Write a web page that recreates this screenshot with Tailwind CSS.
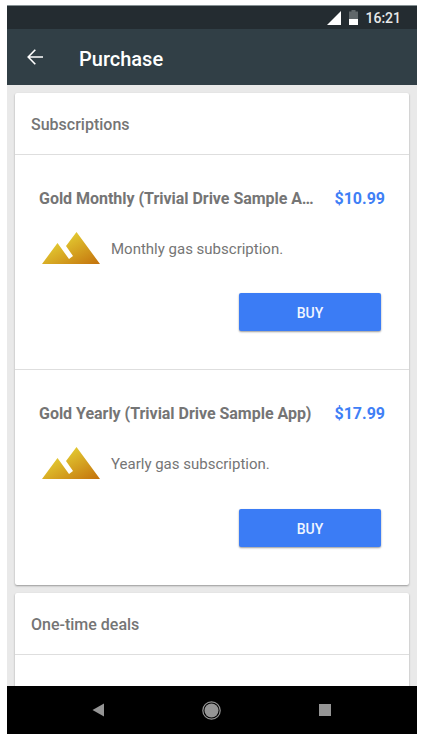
<!DOCTYPE html>
<html lang="en">
<head>
    <meta charset="UTF-8">
    <meta name="viewport" content="width=device-width, initial-scale=1.0">
    <title>Purchase</title>
    <script src="https://cdn.jsdelivr.net/npm/@tailwindcss/browser@4"></script>
</head>
<body class="bg-white h-[741px] overflow-hidden pt-[5px] pl-[7px] font-['Roboto',sans-serif] text-[#757575]">
    <div class="w-[410px] h-[729px] flex flex-col bg-[#e9e9e9] overflow-hidden">
        <!-- Status bar -->
        <div class="h-6 shrink-0 flex items-center justify-end pr-4 bg-[#242c31] border-t border-[#859093] text-white">
            <svg class="w-[14px] h-[14px] mr-2" viewBox="0 0 14 14"><path d="M0 14L14 0V14Z" fill="#fff"/></svg>
            <svg class="w-[9px] h-[15px] mr-[7px]" viewBox="0 0 9 15">
                <path d="M2.500 0h4v1.500H9V9H0V1.500h2.500z" fill="#60676a"/>
                <path d="M0 9h9v6H0z" fill="#fff"/>
            </svg>
            <span class="pt-px text-sm font-medium text-[#e9eaea]">16:21</span>
        </div>

        <!-- App bar -->
        <header class="h-14 shrink-0 flex items-center pl-5 bg-[#313f46] text-white">
            <svg class="w-4 h-4 mr-9" viewBox="0 0 16 16" fill="none" stroke="#fff" stroke-width="1.600"><path d="M16 8H1.500M8.300 0.800L1.200 8L8.300 15.200"/></svg>
            <h1 class="pt-[3px] text-xl font-medium">Purchase</h1>
        </header>

        <main class="flex-1 min-h-0 overflow-hidden p-2 space-y-2">
            <section class="h-[492px] rounded-xs bg-white shadow-[0_1px_2px_rgba(0,0,0,0.35)]">
                <h2 class="h-[61px] flex items-center px-4 pt-[2px] text-base font-medium">Subscriptions</h2>
                <article class="h-[215px] border-t border-[#dedede] px-6">
                    <div class="flex justify-between pt-8 text-base leading-6 font-bold">
                        <h3 class="w-[276px] truncate tracking-[-0.025px]">Gold Monthly (Trivial Drive Sample App)</h3>
                        <span class="text-[#3f80f6]">$10.99</span>
                    </div>
                    <div class="flex items-center h-8 mt-[21px]">
                        <svg class="w-[58px] h-8 ml-[3px] mr-[11px]" viewBox="0 0 58 32">
                            <defs>
                                <linearGradient id="gold" x1="0" y1="0" x2="1" y2="1">
                                    <stop offset="0.200" stop-color="#e6d335"/>
                                    <stop offset="1" stop-color="#c3710c"/>
                                </linearGradient>
                            </defs>
                            <path d="M0 32L15.500 11L27 27L31 24L24 14L34.500 0L58 32Z" fill="url(#gold)"/>
                        </svg>
                        <p class="pt-[2px] text-[15px]">Monthly gas subscription.</p>
                    </div>
                    <div class="flex justify-end mt-[29px] pr-1">
                        <button class="w-[142px] h-[38px] rounded-xs bg-[#3b7cf5] pt-px text-sm font-medium text-[#f0f5ff] shadow-[0_1px_2px_rgba(0,0,0,0.4)]">BUY</button>
                    </div>
                </article>
                <article class="h-[216px] border-t border-[#dedede] px-6">
                    <div class="flex justify-between pt-8 text-base leading-6 font-bold">
                        <h3 class="w-[276px] truncate tracking-[-0.025px]">Gold Yearly (Trivial Drive Sample App)</h3>
                        <span class="text-[#3f80f6]">$17.99</span>
                    </div>
                    <div class="flex items-center h-8 mt-[21px]">
                        <svg class="w-[58px] h-8 ml-[3px] mr-[11px]" viewBox="0 0 58 32"><path d="M0 32L15.500 11L27 27L31 24L24 14L34.500 0L58 32Z" fill="url(#gold)"/></svg>
                        <p class="pt-[3px] text-[15px]">Yearly gas subscription.</p>
                    </div>
                    <div class="flex justify-end mt-[30px] pr-1">
                        <button class="w-[142px] h-[38px] rounded-xs bg-[#3b7cf5] pt-px text-sm font-medium text-[#f0f5ff] shadow-[0_1px_2px_rgba(0,0,0,0.4)]">BUY</button>
                    </div>
                </article>
            </section>

            <section class="h-[492px] rounded-xs bg-white shadow-[0_1px_2px_rgba(0,0,0,0.35)]">
                <h2 class="h-[61px] flex items-center px-4 pt-[2px] text-base font-medium">One-time deals</h2>
                <div class="border-t border-[#dedede]"></div>
            </section>
        </main>

        <!-- Navigation bar -->
        <nav class="h-12 shrink-0 flex items-center pl-[85px] bg-black">
            <svg class="w-3 h-[14px]" viewBox="0 0 12 14"><path d="M0.500 7L12 0.500V13.500Z" fill="#959595"/></svg>
            <svg class="w-[19px] h-[19px] ml-[98px]" viewBox="0 0 19 19">
                <circle cx="9.500" cy="9.500" r="8.700" fill="none" stroke="#959595" stroke-width="1.200"/>
                <circle cx="9.500" cy="9.500" r="7" fill="#959595"/>
            </svg>
            <span class="w-3 h-3 ml-[98px] bg-[#959595]"></span>
        </nav>
    </div>
</body>
</html>
